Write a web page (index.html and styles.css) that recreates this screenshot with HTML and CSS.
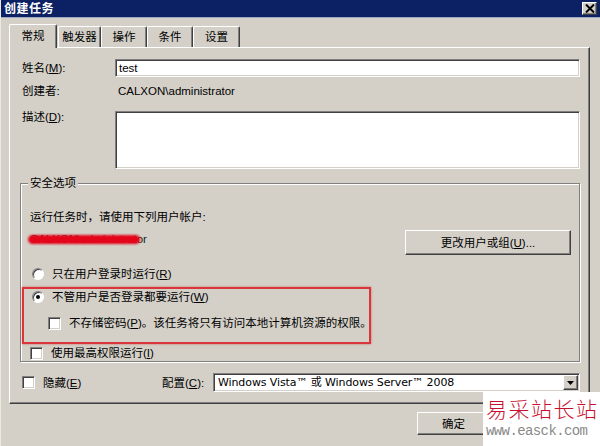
FILE: index.html
```html
<!DOCTYPE html>
<html>
<head>
<meta charset="utf-8">
<link rel="stylesheet" href="styles.css">
</head>
<body>
<div class="window">
  <div class="titlebar">
    <span class="title">创建任务</span>
    <span class="close"><svg width="10" height="9" viewBox="0 0 10 9"><path d="M1 0.5 L9 8.5 M9 0.5 L1 8.5" stroke="#000" stroke-width="2"/></svg></span>
  </div>
  <div class="client">
    <div class="tabs">
      <div class="tab active w48">常规</div>
      <div class="tab w43">触发器</div>
      <div class="tab w46">操作</div>
      <div class="tab w46">条件</div>
      <div class="tab w47">设置</div>
    </div>
    <div class="panel">
      <div class="row r-name">
        <span class="lbl">姓名(<u>M</u>):</span>
        <div class="edit">test</div>
      </div>
      <div class="row r-author">
        <span class="lbl">创建者:</span>
        <span class="val">CALXON\administrator</span>
      </div>
      <div class="row r-desc">
        <span class="lbl lbl-top">描述(<u>D</u>):</span>
        <div class="edit memo"></div>
      </div>

      <div class="group">
        <span class="legend">安全选项</span>
        <div class="g-text">运行任务时，请使用下列用户帐户:</div>
        <div class="user-row">
          <span class="user"><span class="user-name">CALXON\administrator</span><span class="scribble"></span></span>
          <div class="btn btn-user">更改用户或组(<u>U</u>)...</div>
        </div>
        <div class="opt opt-r1"><span class="radio"></span><span>只在用户登录时运行(<u>R</u>)</span></div>
        <div class="highlight">
          <div class="opt"><span class="radio on"><span class="dot"></span></span><span>不管用户是否登录都要运行(<u>W</u>)</span></div>
          <div class="opt opt-pw"><span class="check"></span><span>不存储密码(<u>P</u>)。该任务将只有访问本地计算机资源的权限。</span></div>
        </div>
        <div class="opt opt-hi"><span class="check"></span><span>使用最高权限运行(<u>I</u>)</span></div>
      </div>

      <div class="bottom-row">
        <div class="opt hide-opt"><span class="check"></span><span>隐藏(<u>E</u>)</span></div>
        <span class="cfg-lbl">配置(<u>C</u>):</span>
        <div class="select">
          <span class="sel-text">Windows Vista™ 或 Windows Server™ 2008</span>
          <span class="sel-btn"><svg width="7" height="4" viewBox="0 0 7 4"><path d="M0 0 H7 L3.5 4 Z" fill="#000"/></svg></span>
        </div>
      </div>
    </div>
    <div class="footer">
      <div class="btn btn-ok">确定</div>
      <div class="btn btn-ok btn-hidden"></div>
    </div>
  </div>
  <div class="watermark">
    <div class="wm-cn">易采站长站</div>
    <div class="wm-url">www.easck.com</div>
  </div>
</div>
</body>
</html>
```

FILE: styles.css
```css
* { box-sizing: border-box; }
html, body { margin: 0; padding: 0; }
body {
  width: 600px;
  height: 446px;
  overflow: hidden;
  background: #d4d0c8;
  font: 11.5px/16px "Liberation Sans", "Noto Sans CJK SC", sans-serif;
  color: #000;
}
u { text-decoration: underline; text-underline-offset: 1px; }

.window {
  position: relative;
  width: 600px;
  height: 446px;
  background: #d4d0c8;
  border-left: 1px solid #ece9e2;
}

.titlebar {
  height: 18px;
  background: #0b2163;
  color: #fff;
  display: flex;
  align-items: center;
  justify-content: space-between;
  padding: 0 3px 0 3px;
  border-bottom: 1px solid #9aa6c4;
}
.title { font-weight: bold; font-size: 12px; line-height: 16px; letter-spacing: 0.5px; }
.close {
  width: 15px;
  height: 13px;
  background: #d4d0c8;
  border: 1px solid;
  border-color: #fff #404040 #404040 #fff;
  box-shadow: inset -1px -1px 0 #808080;
  display: flex;
  align-items: center;
  justify-content: center;
}

.client { padding: 6px 10px 0 8px; }

.tabs {
  display: flex;
  align-items: flex-end;
  height: 24px;
  margin-bottom: -1px;
  position: relative;
  z-index: 1;
}
.tab {
  height: 21px;
  margin-bottom: 1px;
  background: #d4d0c8;
  border-left: 1px solid #fff;
  border-top: 1px solid #fff;
  border-right: 1px solid #404040;
  box-shadow: inset -1px 0 0 #808080;
  border-radius: 2px 2px 0 0;
  text-align: center;
  line-height: 19px;
  padding-top: 1px;
  white-space: nowrap;
}
.tab.active {
  height: 24px;
  margin-bottom: 0;
  line-height: 20px;
  padding-top: 1px;
}
.w48 { width: 48px; margin-right: 1px; }
.w43 { width: 43px; }
.w46 { width: 46px; }
.w47 { width: 47px; }

.panel {
  height: 357px;
  border: 1px solid;
  border-color: #fff #404040 #404040 #fff;
  box-shadow: inset -1px -1px 0 #808080;
  padding: 11px 9px 0 12px;
}

.row { display: flex; align-items: center; }
.lbl { width: 93px; flex: none; }
.r-name { height: 18px; }
.r-author { height: 16px; margin-top: 6px; }
.r-desc { margin-top: 12px; align-items: flex-start; }
.lbl-top { margin-top: -2px; }
.val { margin-left: 3px; }

.edit {
  flex: 1;
  height: 18px;
  background: #fff;
  border: 1px solid;
  border-color: #808080 #fff #fff #808080;
  box-shadow: inset 1px 1px 0 #404040, inset -1px -1px 0 #d4d0c8;
  padding: 0 3px;
  line-height: 16px;
}
.memo { height: 58px; }

.group {
  margin: 14px 0 0 -2px;
  border: 1px solid #808080;
  box-shadow: 1px 1px 0 #fff, inset 1px 1px 0 #fff;
  padding: 0 8px 7px 9px;
  height: 179px;
}
.legend {
  display: inline-block;
  background: #d4d0c8;
  margin: -9px 0 0 -2px;
  padding: 0 2px;
  line-height: 16px;
  vertical-align: top;
}
.g-text { margin-top: 9px; }

.user-row {
  display: flex;
  justify-content: space-between;
  align-items: flex-start;
  margin-top: 5px;
}
.user { position: relative; margin-top: 1px; color: #222; white-space: nowrap; }
.scribble {
  position: absolute;
  left: -2px;
  top: 4px;
  width: 112px;
  height: 9px;
  border-radius: 5px;
  background: #e4051a;
  filter: blur(0.9px);
}
.btn {
  background: #d4d0c8;
  border: 1px solid;
  border-color: #fff #404040 #404040 #fff;
  box-shadow: inset -1px -1px 0 #808080;
  display: flex;
  align-items: center;
  justify-content: center;
  white-space: nowrap;
}
.btn-user { width: 166px; height: 25px; }

.opt { display: flex; align-items: center; height: 16px; gap: 8px; white-space: nowrap; }
.opt-r1 { margin-top: 11px; margin-left: 2px; }
.radio {
  width: 12px;
  height: 12px;
  border-radius: 50%;
  background: #fff;
  border: 1px solid;
  border-color: #808080 #fff #fff #808080;
  box-shadow: inset 1px 1px 0 #404040;
  display: flex;
  align-items: center;
  justify-content: center;
  flex: none;
}
.dot { width: 4px; height: 4px; border-radius: 50%; background: #000; }
.check {
  width: 13px;
  height: 13px;
  background: #fff;
  border: 1px solid;
  border-color: #808080 #fff #fff #808080;
  box-shadow: inset 1px 1px 0 #404040, inset -1px -1px 0 #d4d0c8;
  flex: none;
}

.highlight {
  margin: 5px 0 0 -8px;
  width: 349px;
  border: 2px solid #d9353b;
  box-shadow: 0 0 2px rgba(200, 30, 40, 0.6);
  padding: 0 0 11px 8px;
}
.opt-pw { margin-top: 10px; margin-left: 16px; }
.opt-hi { margin-top: 1px; }

.bottom-row {
  display: flex;
  align-items: center;
  margin-top: 11px;
  height: 19px;
}
.hide-opt { width: 140px; }
.cfg-lbl { width: 51px; white-space: nowrap; }
.select {
  flex: 1;
  height: 19px;
  background: #fff;
  border: 1px solid;
  border-color: #808080 #fff #fff #808080;
  box-shadow: inset 1px 1px 0 #404040, inset -1px -1px 0 #d4d0c8;
  display: flex;
  align-items: center;
  justify-content: space-between;
  padding: 1px 1px 1px 4px;
}
.sel-text { font-family: "DejaVu Sans", "Noto Sans CJK SC", sans-serif; font-size: 11px; letter-spacing: -0.1px; white-space: nowrap; }
.sel-btn {
  width: 15px;
  height: 15px;
  background: #d4d0c8;
  border: 1px solid;
  border-color: #fff #404040 #404040 #fff;
  box-shadow: inset -1px -1px 0 #808080;
  display: flex;
  align-items: center;
  justify-content: center;
}

.footer {
  display: flex;
  justify-content: flex-end;
  gap: 6px;
  padding: 8px 21px 0 0;
}
.btn-ok { width: 73px; height: 23px; }

.watermark {
  position: absolute;
  right: 0;
  bottom: 0;
  width: 117px;
  height: 54px;
  background: #fff;
  padding: 4px 0 0 3px;
}
.wm-cn {
  color: #c8102e;
  font: 21px/24px "Noto Sans CJK SC", serif;
  font-weight: 300;
  letter-spacing: 1.5px;
  white-space: nowrap;
}
.wm-url {
  margin-top: 3px;
  color: #8a8a8a;
  font: 14px/17px "Liberation Mono", monospace;
  letter-spacing: -0.6px;
  white-space: nowrap;
}
```
